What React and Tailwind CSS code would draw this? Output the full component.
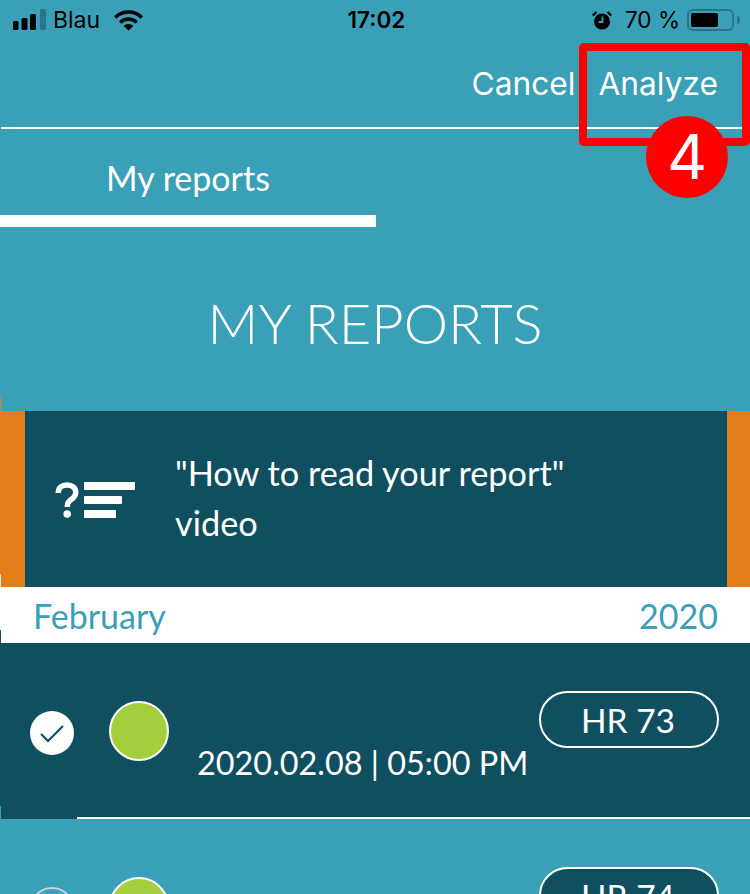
import { useState } from "react";

const LATO = "font-['Lato','Noto_Sans',sans-serif]";

function StatusBar() {
  return (
    <div className="flex h-[40px] items-center justify-between pl-[13px] pr-[10px] text-black">
      <div className="flex w-[260px] items-center">
        <svg width="33" height="22" viewBox="0 0 33 22" className="mr-[7px]">
          <rect x="0" y="12" width="5.5" height="9" rx="1.5" fill="#000" />
          <rect x="8.5" y="9" width="6" height="12" rx="1.5" fill="#000" />
          <rect x="17" y="5" width="6" height="16" rx="1.5" fill="#000" />
          <rect x="27" y="0" width="6" height="21" rx="1.5" fill="#2a7688" />
        </svg>
        <span className="font-['Inter',sans-serif] text-[23px] leading-none">Blau</span>
        <svg width="29" height="21" viewBox="0 0 29 21" className="ml-[14px]">
          <path d="M1.2 7.5 A19 19 0 0 1 27.8 7.5" fill="none" stroke="#000" strokeWidth="3.4" />
          <path d="M6.2 12.5 A11.5 11.5 0 0 1 22.8 12.5" fill="none" stroke="#000" strokeWidth="3.4" />
          <path d="M9.5 16 A7 7 0 0 1 19.5 16 L14.5 20.5 Z" fill="#000" />
        </svg>
      </div>
      <span className="font-['Inter',sans-serif] text-[22.5px] font-semibold leading-none">17:02</span>
      <div className="flex w-[260px] items-center justify-end">
        <svg width="20" height="19" viewBox="0 0 20 19" className="mr-[13px]">
          <circle cx="10" cy="10.5" r="8" fill="#000" />
          <path d="M10.5 5.5 V11 H6.5" fill="none" stroke="#39a0b8" strokeWidth="1.8" />
          <path d="M0.8 4.5 L4.5 1 M19.2 4.5 L15.5 1" stroke="#000" strokeWidth="2.2" />
        </svg>
        <span className="font-['Inter',sans-serif] text-[22.5px] leading-none">70 %</span>
        <div className="ml-[7px] flex h-[22px] w-[47px] items-center rounded-[6px] border-2 border-[#2a7688] p-[2px]">
          <div className="h-full w-[70%] rounded-[2px] bg-black" />
        </div>
        <div className="ml-[3px] h-[8px] w-[3px] rounded-r-full bg-[#2a7688]" />
      </div>
    </div>
  );
}

function HelpIcon() {
  return (
    <div className="flex w-[150px] items-center pl-[29px] pt-[2px]">
      <svg width="24" height="36" viewBox="0 0 24 36" className="ml-[1px]">
        <path
          d="M3.2 11 C3.2 5.5 7 3 12 3 C17.5 3 20.8 6 20.8 10.5 C20.8 15 17.5 16.5 15 18.5 C13 20 12.2 22 12.2 25"
          fill="none"
          stroke="#fff"
          strokeWidth="5.4"
        />
        <circle cx="12.2" cy="32" r="3.8" fill="#fff" />
      </svg>
      <div className="ml-[5px] flex flex-col gap-[6px]">
        <div className="h-[8px] w-[51px] rounded-[1px] bg-white" />
        <div className="h-[8px] w-[38px] rounded-[1px] bg-white" />
        <div className="h-[8px] w-[32px] rounded-[1px] bg-white" />
      </div>
    </div>
  );
}

function ReportRow({ hr, date, selected, onToggle }) {
  return (
    <div
      className={`flex h-[176px] items-start ${selected ? "bg-[#0f4f5f]" : "bg-[#39a0b8]"}`}
      onClick={onToggle}
    >
      <div className="ml-[30px] mt-[68px] flex h-[44px] w-[44px] shrink-0 items-center justify-center">
        {selected ? (
          <div className="flex h-[44px] w-[44px] items-center justify-center rounded-full bg-white">
            <svg width="26" height="22" viewBox="0 0 26 22">
              <path d="M2 12 L9 19 L24 4" fill="none" stroke="#0f4f5f" strokeWidth="2.2" />
            </svg>
          </div>
        ) : (
          <div className="h-[44px] w-[44px] rounded-full border-2 border-[#c8d0d2]" />
        )}
      </div>
      <div className="ml-[35px] mt-[58px] h-[60px] w-[60px] shrink-0 rounded-full border-2 border-white bg-[#a4cf3c]" />
      {date && (
        <span className={`${LATO} ml-[28px] mt-[99px] whitespace-nowrap text-[32.4px] leading-[42px] text-white`}>
          {date}
        </span>
      )}
      <div
        className={`${LATO} ml-auto mr-[31px] mt-[48px] flex h-[57px] w-[180px] shrink-0 items-center justify-center rounded-full border-2 border-white bg-[#0f4f5f] pr-[2px] pt-[1px] text-[33.5px] text-white`}
      >
        {hr}
      </div>
    </div>
  );
}

export default function App() {
  const [checked, setChecked] = useState({ 0: true });
  const reports = [{ hr: "HR 73", date: "2020.02.08 | 05:00 PM" }, { hr: "HR 74" }];

  return (
    <div className={`${LATO} relative h-[894px] w-[750px] overflow-hidden bg-[#39a0b8]`}>
      <StatusBar />

      <div className="flex h-[87px] items-center justify-end gap-[23px] pr-[32px] font-['Inter',sans-serif] text-[31.7px] text-white">
        <span>Cancel</span>
        <span>Analyze</span>
      </div>

      <div className="ml-[1px] h-[2px] bg-white" />

      <div className="flex h-[86px] w-[376px] items-center justify-center pt-[11px] text-[34px] text-white">
        My reports
      </div>
      <div className="h-[12px] w-[376px] bg-white" />

      <h1 className="flex h-[184px] items-center justify-center pt-[12px] pb-[4px] text-[56px] font-light text-white">
        MY REPORTS
      </h1>

      <div className="flex h-[176px] items-center border-l-[25px] border-r-[23px] border-l-[#e27d17] border-r-[#e27d17] bg-[#0f4f5f]">
        <HelpIcon />
        <p className="m-0 pb-[2px] text-[34.3px] leading-[50px] text-white">
          "How to read your report"
          <br />
          video
        </p>
      </div>

      <div className="flex h-[56px] items-center justify-between bg-white pl-[33px] pr-[32px] text-[34px] text-[#39a0b8]">
        <span>February</span>
        <span>2020</span>
      </div>

      {reports.map((r, i) => (
        <div key={r.hr}>
          <ReportRow
            hr={r.hr}
            date={r.date}
            selected={!!checked[i]}
            onToggle={() => setChecked({ ...checked, [i]: !checked[i] })}
          />
          {i === 0 && <div className="-mt-[2px] ml-[77px] h-[2px] bg-white" />}
        </div>
      ))}

      {/* 1px seam down the left edge of the screenshot */}
      <div className="absolute left-0 top-[397px] h-[14px] w-[1px] bg-[#e27d17]" />
      <div className="absolute left-0 top-[574px] h-[13px] w-[1px] bg-[#f3e6d8]" />
      <div className="absolute left-0 top-[630px] h-[13px] w-[1px] bg-[#0f4f5f]" />
      <div className="absolute left-0 top-[806px] h-[13px] w-[1px] bg-[#39a0b8]" />

      {/* annotation on top of the screenshot */}
      <div className="absolute left-[579px] top-[43px] h-[103px] w-[171px] rounded-[5px] border-[8px] border-[#ff0000]" />
      <div className="absolute left-[646px] top-[116px] flex h-[82px] w-[82px] items-center justify-center rounded-full bg-[#ff0000] font-['Inter',sans-serif] text-[62px] leading-none text-white">
        4
      </div>
    </div>
  );
}
